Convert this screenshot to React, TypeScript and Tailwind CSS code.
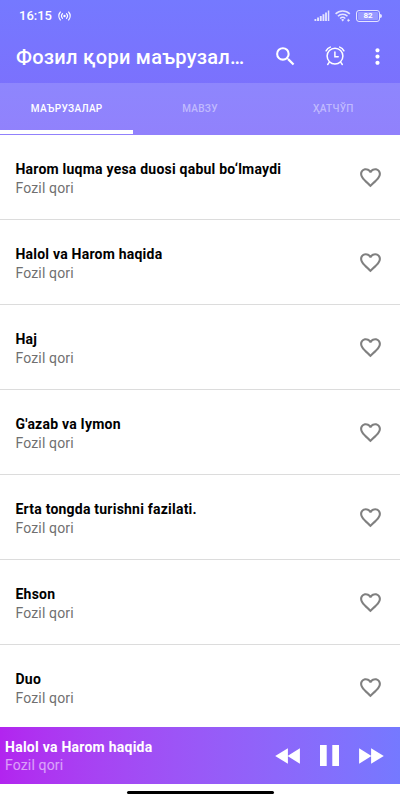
import { MdFavoriteBorder, MdMoreVert, MdSearch } from "react-icons/md";

const tracks = [
  "Harom luqma yesa duosi qabul bo‘lmaydi",
  "Halol va Harom haqida",
  "Haj",
  "G'azab va Iymon",
  "Erta tongda turishni fazilati.",
  "Ehson",
  "Duo",
];

const tabs = ["МАЪРУЗАЛАР", "МАВЗУ", "ҲАТЧЎП"];

function CastIcon() {
  return (
    <svg className="h-[10px] w-[13px]" viewBox="0 0 13 10" fill="none" stroke="currentColor" strokeWidth="1.1" strokeLinecap="round">
      <circle cx="6.5" cy="5" r="1.2" fill="currentColor" stroke="none" />
      <path d="M4.5 2.7a3.3 3.3 0 0 0 0 4.6M8.5 2.7a3.3 3.3 0 0 1 0 4.6M2.4 1a5.8 5.8 0 0 0 0 8M10.6 1a5.8 5.8 0 0 1 0 8" />
    </svg>
  );
}

function SignalIcon() {
  return (
    <svg className="h-[11px] w-4" viewBox="0 0 16 11" fill="currentColor">
      <path d="M0.5 9h1.8v2h-1.8zM3.1 7.6h1.9v3.4h-1.9zM5.8 6h1.9v5h-1.9zM8.5 4.2h1.9v6.8h-1.9zM11.1 2.4h1.8v8.6h-1.8zM13.8 0.4h1.5v10.6h-1.5z" />
    </svg>
  );
}

function WifiIcon() {
  return (
    <svg className="h-3 w-4" viewBox="0 0 16 12" fill="none" stroke="currentColor" strokeWidth="1.6">
      <path d="M0.6 3.9a10 10 0 0 1 14.2 0M2.9 6.3a6.8 6.8 0 0 1 9.6 0M5.1 8.5a3.8 3.8 0 0 1 5.2 0" />
      <path d="M7.7 11.5l-1.5-1.8a2.2 2.2 0 0 1 3 0z" fill="currentColor" stroke="none" />
      <path d="M13.3 8.8v3M12.2 10.3h2.8" strokeWidth="0.9" />
    </svg>
  );
}

function AlarmIcon() {
  return (
    <svg className="h-5 w-5" viewBox="0 0 20 20" fill="none" stroke="currentColor" strokeWidth="1.5" strokeLinecap="round">
      <circle cx="10" cy="10.1" r="7.9" />
      <path d="M9.9 5.9v4.8h3.3M4.2 16.4l-1.5 2.1M15.8 16.4l1.5 2.1M1.1 4.8a8 8 0 0 1 4.2-3.7M18.9 4.8a8 8 0 0 0-4.2-3.7" />
    </svg>
  );
}

function RewindIcon() {
  return (
    <svg className="h-4 w-[25px]" viewBox="0 0 25 16" fill="currentColor">
      <path d="M0.2 8L12.9 0.2v15.6zM12.5 8L24.9 0.2v15.6z" />
    </svg>
  );
}

function PauseIcon() {
  return (
    <svg className="h-[21px] w-[19px]" viewBox="0 0 19 21" fill="currentColor">
      <path d="M0 0h6.7v21H0zM12.3 0H19v21h-6.7z" />
    </svg>
  );
}

function ForwardIcon() {
  return (
    <svg className="h-4 w-[25px]" viewBox="0 0 25 16" fill="currentColor">
      <path d="M24.8 8L12.1 0.2v15.6zM12.5 8L0.1 0.2v15.6z" />
    </svg>
  );
}

function Header() {
  return (
    <header className="h-[135px] bg-linear-to-b from-[#7579ff] to-[#7e6cfc] text-white">
      <div className="flex h-[30px] items-center pt-px pl-[19px] pr-[18px]">
        <span className="text-[13px] font-medium leading-4">16:15</span>
        <span className="ml-[6px] mr-auto"><CastIcon /></span>
        <div className="flex items-center text-white/80">
          <SignalIcon />
          <span className="ml-[5px]"><WifiIcon /></span>
          <div className="ml-[5px] flex h-[12px] w-6 items-center justify-center rounded-[3px] border border-white/80 p-px">
            <span className="flex h-full w-full items-center justify-center rounded-[1px] bg-white/25 text-[8px] font-bold leading-none text-white">82</span>
          </div>
          <span className="h-1 w-[2px] rounded-r-sm bg-white/80" />
        </div>
      </div>
      <div className="flex h-[53px] items-center pl-4">
        <h1 className="w-[230px] whitespace-nowrap text-[20px] font-medium leading-6 tracking-[0.28px]">Фозил қори маърузал…</h1>
        <MdSearch className="mb-px ml-[27px] h-[25px] w-[25px]" />
        <span className="ml-[26.5px] pb-px"><AlarmIcon /></span>
        <MdMoreVert className="mb-px ml-[20.5px] h-[25px] w-[25px]" />
      </div>
      <nav className="grid h-[52px] grid-cols-3 bg-white/15 pb-px text-[10px] font-medium tracking-[0.3px]">
        {tabs.map((tab, i) => (
          <div
            key={tab}
            className={`flex items-center justify-center border-b-4 ${
              i === 0 ? "border-white" : "border-transparent text-white/45"
            }`}
          >
            <span className="pt-1">{tab}</span>
          </div>
        ))}
      </nav>
    </header>
  );
}

function TrackRow({ title }: { title: string }) {
  return (
    <li className="flex h-[85px] shrink-0 items-center justify-between border-b border-[#dcdcdc] pl-[15.5px] pr-[17px]">
      <div className="pt-[2px]">
        <p className="text-[14px] font-bold leading-[19px] tracking-[0.22px] text-black">{title}</p>
        <p className="text-[14px] leading-[18px] tracking-[0.15px] text-[#707070]">Fozil qori</p>
      </div>
      <MdFavoriteBorder className="h-[25px] w-[25px] text-[#808080]" />
    </li>
  );
}

function Player() {
  return (
    <footer className="flex h-[57px] shrink-0 items-center bg-linear-to-r from-[#b224ef] to-[#7579ff] pl-[5px] text-white">
      <div className="mr-auto">
        <p className="text-[14px] font-bold leading-[18px] tracking-[0.25px]">Halol va Harom haqida</p>
        <p className="text-[14px] leading-[18px] tracking-[0.15px] text-white/55">Fozil qori</p>
      </div>
      <RewindIcon />
      <span className="ml-5"><PauseIcon /></span>
      <span className="ml-5 mr-4"><ForwardIcon /></span>
    </footer>
  );
}

export default function App() {
  return (
    <div className="flex h-[800px] w-[400px] flex-col overflow-hidden bg-white font-[Roboto,sans-serif]">
      <Header />
      <ul className="flex h-[592px] flex-col overflow-hidden">
        {tracks.map((title) => (
          <TrackRow key={title} title={title} />
        ))}
      </ul>
      <Player />
      <div className="flex h-4 shrink-0 items-center justify-center">
        <span className="h-[3px] w-[147px] rounded-full bg-black" />
      </div>
    </div>
  );
}
